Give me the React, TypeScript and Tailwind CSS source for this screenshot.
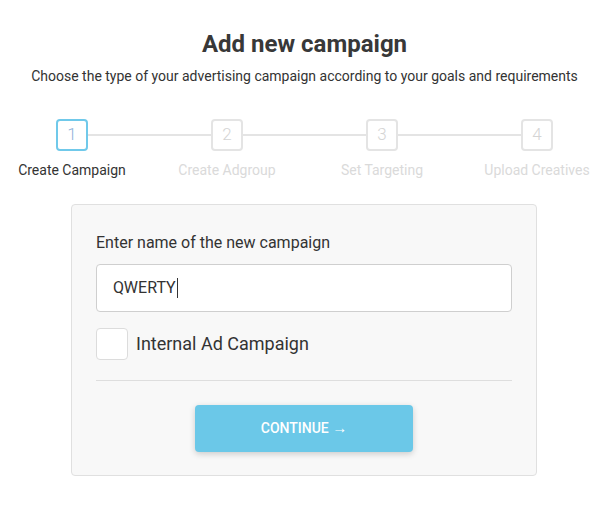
import React from "react";

const steps = ["Create Campaign", "Create Adgroup", "Set Targeting", "Upload Creatives"];

export default function App() {
  return (
    <div className="w-[609px] h-[516px] bg-white overflow-hidden" style={{ fontFamily: "Roboto, 'Liberation Sans', sans-serif" }}>
      <div className="pt-[30px] flex flex-col items-center">
        <h1 className="text-[24px] leading-[28px] font-bold text-[#383838]">Add new campaign</h1>
        <p className="mt-[10px] text-[14px] leading-[17px] text-[#333]">
          Choose the type of your advertising campaign according to your goals and requirements
        </p>
      </div>

      <div className="mt-[34px] flex justify-center">
        {steps.map((s, i) => (
          <div key={s} className="w-[155px] shrink-0 flex flex-col items-center">
            <div className="relative w-full flex justify-center">
              {i > 0 && <div className="absolute left-0 right-1/2 top-[15px] h-[2px] bg-[#e4e4e4]" />}
              {i < steps.length - 1 && <div className="absolute left-1/2 right-0 top-[15px] h-[2px] bg-[#e4e4e4]" />}
              <div
                className={
                  "relative z-10 w-[32px] h-[32px] rounded-[4px] border-2 bg-white flex items-center justify-center text-[17px] font-light " +
                  (i === 0 ? "border-[#70c9ea] text-[#8fb4dc]" : "border-[#e4e4e4] text-[#d4d4d4]")
                }
              >
                {i + 1}
              </div>
            </div>
            <div className={"mt-[11px] text-[14px] leading-[17px] whitespace-nowrap " + (i === 0 ? "text-[#333]" : "text-[#dadada]")}>
              {s}
            </div>
          </div>
        ))}
      </div>

      <div className="mt-[25px] ml-[71px] w-[466px] rounded-[4px] border border-[#e0e0e0] bg-[#f8f8f8] px-[24px] pt-[28px] pb-[23px]">
        <div className="text-[16px] leading-[20px] text-[#333]">Enter name of the new campaign</div>
        <div className="mt-[11px] h-[48px] rounded-[4px] border border-[#cfcfcf] bg-white flex items-center pl-[16px]">
          <span className="text-[16px] text-[#333]">QWERTY</span>
          <span className="ml-[1px] w-[1px] h-[20px] bg-[#333]" />
        </div>
        <div className="mt-[16px] flex items-center">
          <div className="w-[32px] h-[32px] rounded-[4px] border border-[#dcdcdc] bg-white" />
          <span className="ml-[8px] text-[18px] leading-[22px] text-[#333]">Internal Ad Campaign</span>
        </div>
        <div className="mt-[20px] h-px bg-[#dedede]" />
        <div className="mt-[24px] flex justify-center">
          <button className="w-[218px] h-[47px] rounded-[4px] bg-[#6bc8e8] text-white text-[14px] font-medium shadow-[0_2px_6px_rgba(0,0,0,0.18)]">
            CONTINUE <span className="text-[15px] font-bold">→</span>
          </button>
        </div>
      </div>
    </div>
  );
}
